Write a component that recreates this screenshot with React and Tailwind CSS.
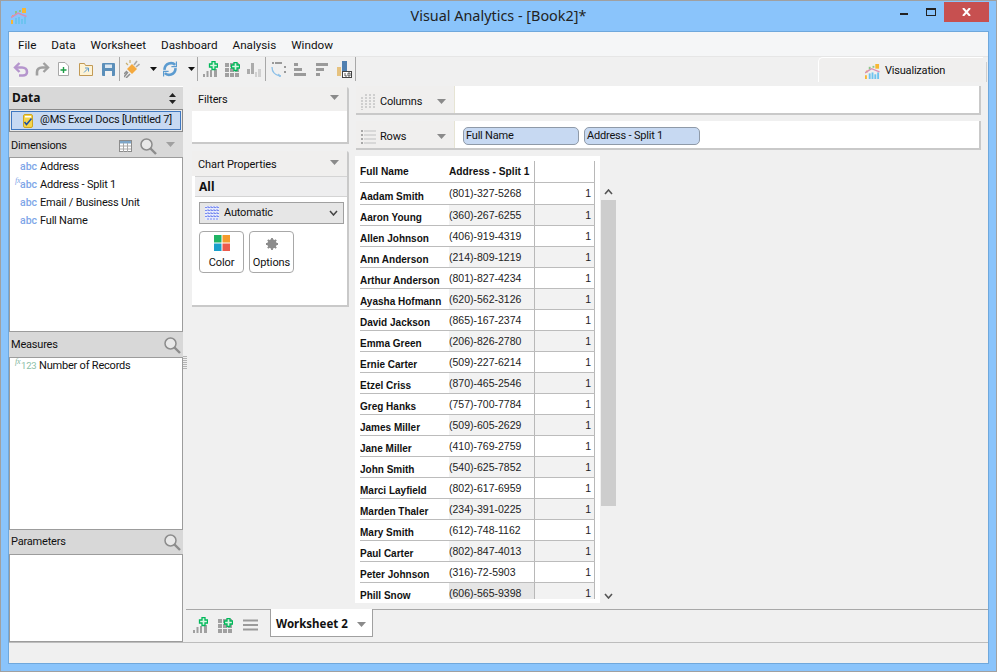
import React from "react";

const UI = { fontFamily: 'Roboto, "Liberation Sans", sans-serif' };
const NOTO = { fontFamily: '"Noto Sans", "Liberation Sans", sans-serif' };

const rows = [
  ["Aadam Smith", "(801)-327-5268"],
  ["Aaron Young", "(360)-267-6255"],
  ["Allen Johnson", "(406)-919-4319"],
  ["Ann Anderson", "(214)-809-1219"],
  ["Arthur Anderson", "(801)-827-4234"],
  ["Ayasha Hofmann", "(620)-562-3126"],
  ["David Jackson", "(865)-167-2374"],
  ["Emma Green", "(206)-826-2780"],
  ["Ernie Carter", "(509)-227-6214"],
  ["Etzel Criss", "(870)-465-2546"],
  ["Greg Hanks", "(757)-700-7784"],
  ["James Miller", "(509)-605-2629"],
  ["Jane Miller", "(410)-769-2759"],
  ["John Smith", "(540)-625-7852"],
  ["Marci Layfield", "(802)-617-6959"],
  ["Marden Thaler", "(234)-391-0225"],
  ["Mary Smith", "(612)-748-1162"],
  ["Paul Carter", "(802)-847-4013"],
  ["Peter Johnson", "(316)-72-5903"],
  ["Phill Snow", "(606)-565-9398"],
];

const Caret = ({ c = "#8a8a8a", w = 9, h = 5 }) => (
  <svg width={w} height={h} viewBox="0 0 10 6" preserveAspectRatio="none"><path d="M0 0h10L5 6z" fill={c} /></svg>
);
const Small = () => (
  <svg width="7" height="4" viewBox="0 0 7 4"><path d="M0 0h7L3.500 4z" fill="#111" /></svg>
);

const Logo = ({ s = 16 }) => (
  <svg width={s} height={s} viewBox="0 0 16 16" className="shrink-0">
    <rect x="0" y="12" width="2" height="4" fill="#f7b733" />
    <rect x="1" y="7" width="2" height="2" fill="#f7b733" />
    <rect x="4" y="10" width="2" height="6" fill="#6cc3f0" />
    <rect x="7" y="9" width="2" height="7" fill="#6cc3f0" />
    <rect x="10" y="11" width="2" height="5" fill="#6cc3f0" />
    <rect x="13" y="9" width="2" height="7" fill="#6cc3f0" />
    <rect x="4" y="3" width="2" height="3" fill="#8cc587" />
    <rect x="8" y="2" width="2" height="2" fill="#8cc587" />
    <rect x="11" y="0" width="4" height="5" fill="#f7b733" />
    <path d="M0 9.500 7 5 15.500 8.500" stroke="#d88fb5" strokeWidth="1.500" fill="none" />
  </svg>
);

const Plus = ({ x, y }) => (
  <path d={`M${x + 2.5} ${y}h3v2.500h2.500v3h-2.500v2.500h-3v-2.500h-2.500v-3h2.500z`} fill="#d8f5e2" stroke="#00b85a" strokeWidth="1.300" />
);

const BarsPlus = () => (
  <svg width="15" height="16" viewBox="0 0 15 16">
    <rect x="0" y="13" width="2" height="3" fill="#a0a0a0" />
    <rect x="3.500" y="10" width="2" height="6" fill="#a0a0a0" />
    <rect x="7" y="9" width="2" height="7" fill="#a0a0a0" />
    <rect x="11" y="8" width="3" height="8" fill="#a0a0a0" />
    <Plus x={6.5} y={0.5} />
  </svg>
);
const GridPlus = () => (
  <svg width="15" height="15" viewBox="0 0 15 15">
    {[0, 5, 10].map((x) => [1, 6, 11].map((y) => <rect key={x + "-" + y} x={x} y={y} width="4" height="4" fill="#a0a0a0" />))}
    <Plus x={6.5} y={0.5} />
  </svg>
);
const Search = () => (
  <svg width="17" height="17" viewBox="0 0 17 17" fill="none" stroke="#8c8c8c">
    <circle cx="6.500" cy="6.500" r="5.500" strokeWidth="1.500" fill="#e8e8e8" />
    <path d="M10.500 10.500l5.500 5.500" strokeWidth="2.400" />
  </svg>
);

const ToolSep = ({ className = "" }) => <div className={"w-px h-[24px] bg-[#a8a8a8] " + className} />;

function Toolbar() {
  return (
    <div className="h-[25px] shrink-0 flex items-center pl-[4px] bg-[#f0f0f0] border-t border-[#e6e6e6] relative">
      <svg width="16" height="15" viewBox="0 0 16 15" fill="none" stroke="#b595cd" strokeWidth="2.600"><path d="M3 5.500h6c3 0 5 2 5 4.500s-2 3.500-4 3.500H6" /><path d="M6.500 1 2 5.500 6.500 10" strokeWidth="2.400" /></svg>
      <svg width="15" height="15" viewBox="0 0 15 15" fill="none" stroke="#a0a0a0" strokeWidth="2.600" className="ml-[6px]"><path d="M12 5.500H7c-3 0-5 2-5 4.500v3.500" /><path d="M8.500 1 13 5.500 8.500 10" strokeWidth="2.400" /></svg>
      <svg width="11" height="14" viewBox="0 0 11 14" className="ml-[8px]"><path d="M.5.500h6.500l3.500 3.500v9.500H.5z" fill="#fff" stroke="#a8a8a8" /><path d="M5.500 5v6M2.500 8h6" stroke="#1c9d45" strokeWidth="1.400" /></svg>
      <svg width="14" height="13" viewBox="0 0 14 13" className="ml-[10px]"><path d="M.5 12.500V.5h5l1 2h7v10z" fill="#fdf3d6" stroke="#c29a55" /><path d="M5 9.500l4-4M6 5h3.500v3.500" stroke="#5a9ad0" fill="none" /></svg>
      <svg width="13" height="13" viewBox="0 0 13 13" className="ml-[9px]"><rect width="13" height="13" rx="1" fill="#5b8fba" /><rect x="3" y="1.500" width="7" height="3.500" fill="#dce8f2" /><rect x="3" y="8" width="7" height="5" fill="#f2f2f2" /></svg>
      <ToolSep className="ml-[4px]" />
      <svg width="16" height="18" viewBox="0 0 16 18" className="ml-[4px]">
        <path d="M0 17 4 12M2 18l4-4M0 14l3-3" stroke="#8f8f8f" strokeWidth="1.500" />
        <path d="M3 9l5-5 5 5-5 5z" fill="#f4a93e" />
        <path d="M10 5l3-4M12 7l3.500-3" stroke="#a8a8a8" strokeWidth="1.600" />
        <path d="M2 3l2 2M6 0v3" stroke="#c8b070" strokeWidth="1.200" />
      </svg>
      <div className="ml-[10px]"><Small /></div>
      <svg width="14" height="16" viewBox="0 0 15 16" fill="none" stroke="#5b9bd0" strokeWidth="2.800" className="ml-[6px]"><path d="M13 3.500C10 .5 2 1 1.500 9" /><path d="M2 12.500c3 3 11 2.500 11.500-5.500" /><path d="M9 5.500h5.500V0M6 10.500H.5V16" strokeWidth="1.500" /></svg>
      <div className="ml-[11px]"><Small /></div>
      <ToolSep className="ml-[2px]" />
      <span className="ml-[5px]"><BarsPlus /></span>
      <span className="ml-[7px]"><GridPlus /></span>
      <svg width="14" height="15" viewBox="0 0 14 15" className="ml-[7px]"><rect x="0" y="7" width="3" height="5" fill="#ababab" /><rect x="4" y="1" width="3" height="11" fill="#ababab" /><rect x="8" y="10" width="2" height="5" fill="#d0d0d0" /><rect x="11" y="7" width="3" height="8" fill="#d0d0d0" /></svg>
      <ToolSep className="ml-[4px]" />
      <svg width="15" height="15" viewBox="0 0 15 15" fill="none" className="ml-[5px]"><path d="M1 5c0 5 3 8 8 9" stroke="#8cc0e8" strokeWidth="1.300" /><path d="M7 12l3 2-2 1" stroke="#8cc0e8" /><path d="M4 1h7" stroke="#9a9a9a" strokeWidth="2" /><path d="M1 1h2M14 4v2M14 9v2" stroke="#9a9a9a" strokeWidth="2" /></svg>
      <svg width="12" height="13" viewBox="0 0 12 13" className="ml-[8px]"><rect x="0" y="0" width="4" height="3" fill="#9a9a9a" /><rect x="0" y="5" width="8" height="3" fill="#9a9a9a" /><rect x="0" y="10" width="12" height="3" fill="#9a9a9a" /></svg>
      <svg width="12" height="13" viewBox="0 0 12 13" className="ml-[10px]"><rect x="0" y="0" width="12" height="3" fill="#9a9a9a" /><rect x="0" y="5" width="8" height="3" fill="#9a9a9a" /><rect x="0" y="10" width="4" height="3" fill="#9a9a9a" /></svg>
      <svg width="15" height="17" viewBox="0 0 15 17" className="ml-[9px]"><rect x="0" y="6" width="4" height="9" fill="#e6c27f" /><rect x="5" y="0" width="5" height="10" fill="#4f7fb0" /><rect x="5.500" y="10.500" width="9" height="6" fill="#fff" stroke="#444" /><path d="M8 12v3h2M11 12h2v3h-2z" stroke="#333" strokeWidth=".8" fill="none" /></svg>
      <ToolSep className="ml-[3px]" />
      <div className="absolute right-[5px] top-0 h-[25px] w-[165px] rounded-tl-[5px] bg-[#f0efee] border-t border-l border-white flex items-center text-[11px] tracking-[-0.2px] text-[#111] pl-[46px] pt-[3px]">
        <Logo s={15} />
        <span className="ml-[5px]">Visualization</span>
        <div className="absolute right-[-4px] top-[4px] bottom-0 w-px bg-[#cfcfcf]" />
      </div>
    </div>
  );
}

const Field = ({ tag, fx, children, green }) => (
  <div className={"h-[18px] flex items-center text-[11px] tracking-[-0.2px] text-[#111] whitespace-nowrap relative " + (green ? "-mt-[1px]" : "")}>
    {fx && <span className={"absolute left-[5px] top-[-1px] text-[8px] italic " + (green ? "text-[#7fb59a]" : "text-[#7ea6e8]")} style={{ fontFamily: "Liberation Serif" }}>fx</span>}
    {green
      ? <span className="ml-[11px] w-[18px] text-[9.500px] text-[#8cc0a8]">{tag}</span>
      : <span className="ml-[10px] w-[20px] text-[10.500px] font-medium tracking-normal text-[#7ea6e8]">{tag}</span>}
    <span>{children}</span>
  </div>
);

function SideHead({ title, h, children }) {
  return (
    <div className={"shrink-0 bg-[#d8d8d8] flex items-center pl-[2px] text-[11px] tracking-[-0.2px] text-[#111] " + h}>
      <span>{title}</span>
      {children}
    </div>
  );
}

function Sidebar() {
  return (
    <div className="w-[174px] shrink-0 flex flex-col text-[#111] relative">
      <div className="h-[23px] shrink-0 bg-[#d8d8d8] flex items-center justify-between pl-[3px] pr-[7px] font-bold text-[12px] border-t border-white" style={NOTO}>
        <span>Data</span>
        <svg width="7" height="11" viewBox="0 0 7 11"><path d="M3.500 0 7 4H0zM3.500 11 7 7H0z" fill="#222" /></svg>
      </div>
      <div className="h-[23px] shrink-0 border border-[#8a8a8a] bg-[#e9e9e9] p-[1px]">
        <div className="h-full border border-[#3f77c0] bg-[#c7d9f2] flex items-center text-[11px] tracking-[-0.2px] pl-[11px] whitespace-nowrap">
          <svg width="10" height="14" viewBox="0 0 10 14" className="shrink-0"><rect x=".5" y=".5" width="9" height="13" rx="1.500" fill="#f5d44b" stroke="#d0a520" /><rect x="2" y="2" width="6" height="1.500" fill="#fff" /><path d="M1.500 8l2 2.500 5-6" stroke="#1e4fa0" strokeWidth="1.500" fill="none" /></svg>
          <span className="ml-[7px]">@MS Excel Docs [Untitled 7]</span>
        </div>
      </div>
      <SideHead title="Dimensions" h="h-[25px] pt-[3px]">
        <div className="ml-auto flex items-center pr-[8px]">
          <svg width="13" height="12" viewBox="0 0 13 12"><rect x=".5" y=".5" width="12" height="11" fill="#fff" stroke="#8c8c8c" /><rect x="1" y="1" width="11" height="2.500" fill="#7ea6c8" /><path d="M1 6h11M1 9h11M4.500 3v9M8.500 3v9" stroke="#a8a8a8" /></svg>
          <span className="ml-[8px]"><Search /></span>
          <span className="ml-[9px] mb-[4px]"><Caret c="#a0a0a0" /></span>
        </div>
      </SideHead>
      <div className="h-[175px] shrink-0 bg-white border border-[#9c9c9c]">
        <Field tag="abc">Address</Field>
        <Field tag="abc" fx>Address - Split 1</Field>
        <Field tag="abc">Email / Business Unit</Field>
        <Field tag="abc">Full Name</Field>
      </div>
      <SideHead title="Measures" h="h-[25px] pt-[1px]">
        <span className="ml-auto mr-[2px]"><Search /></span>
      </SideHead>
      <div className="h-[173px] shrink-0 bg-white border border-[#9c9c9c]">
        <Field tag="123" fx green>Number of Records</Field>
      </div>
      <SideHead title="Parameters" h="h-[24px] pt-[1px]">
        <span className="ml-auto mr-[2px]"><Search /></span>
      </SideHead>
      <div className="h-[88px] shrink-0 bg-white border border-[#9c9c9c]" />
      <div className="absolute left-[174px] top-[270px] w-[4px] h-[14px] bg-[repeating-linear-gradient(#b4b4b4_0px,#b4b4b4_1px,transparent_1px,transparent_2px)]" />
    </div>
  );
}

function CardHead({ title, h }) {
  return (
    <div className={"bg-[#f0efee] flex items-center justify-between pl-[6px] pr-[8px] pt-[3px] text-[11px] tracking-[-0.1px] text-[#111] " + h}>
      <span>{title}</span>
      <span className="mb-[6px]"><Caret /></span>
    </div>
  );
}

function Middle() {
  return (
    <div className="w-[157px] shrink-0 ml-[9px] mt-[1px] flex flex-col gap-[7px]">
      <div className="h-[57px] bg-white border-r-2 border-b-2 border-[#c9c9c9] rounded-tr-[3px]">
        <CardHead title="Filters" h="h-[24px]" />
      </div>
      <div className="h-[156px] bg-white border-r-2 border-b-2 border-[#c9c9c9] rounded-tr-[3px]">
        <CardHead title="Chart Properties" h="h-[25px]" />
        <div className="h-[21px] ml-[3px] bg-[#eeeeef] border-t border-b border-[#d4d4d4] flex items-center pl-[4px] pt-[1px] font-bold text-[12px] text-[#111]" style={NOTO}>All</div>
        <div className="ml-[7px] w-[145px] mt-[5px] h-[22px] border border-[#a0a0a0] bg-[#e6e6e6] flex items-center text-[11px] tracking-[-0.2px] text-[#111] pl-[5px]">
          <svg width="14" height="14" viewBox="0 0 14 14"><rect width="14" height="14" fill="#e6eafc" /><path d="M0 1.500h14M0 4.500h14M0 7.500h14M0 10.500h14M3 0v14M6 0v14M9 0v14M12 0v14" stroke="#7a8cf0" strokeDasharray="2 1" /></svg>
          <span className="ml-[5px] pt-[1px]">Automatic</span>
          <svg width="9" height="6" viewBox="0 0 9 6" className="ml-auto mr-[5px]" fill="none" stroke="#444" strokeWidth="1.500"><path d="M1 1l3.500 4L8 1" /></svg>
        </div>
        <div className="flex gap-[5px] ml-[7px] mt-[7px]">
          <div className="w-[45px] h-[42px] rounded-[4px] border border-[#a8a8a8] bg-white flex flex-col items-center text-[11px] tracking-[-0.1px] text-[#111] pt-[3px]">
            <svg width="16" height="16" viewBox="0 0 16 16"><rect width="7.500" height="7.500" fill="#20b464" /><rect x="8.500" width="7.500" height="7.500" fill="#f59b2c" /><rect y="8.500" width="7.500" height="7.500" fill="#1a9fcb" /><rect x="8.500" y="8.500" width="7.500" height="7.500" fill="#ec5a4c" /></svg>
            <span className="mt-[4px] leading-[16px]">Color</span>
          </div>
          <div className="w-[45px] h-[42px] rounded-[4px] border border-[#a8a8a8] bg-white flex flex-col items-center text-[11px] tracking-[-0.1px] text-[#111] pt-[6px]">
            <svg width="12" height="12" viewBox="0 0 12 12"><circle cx="6" cy="6" r="3.500" fill="none" stroke="#8c8c8c" strokeWidth="2.500" /><path d="M6 0v12M0 6h12M1.800 1.800l8.400 8.400M10.200 1.800l-8.400 8.400" stroke="#8c8c8c" strokeWidth="1.800" /></svg>
            <span className="mt-[5px] leading-[16px]">Options</span>
          </div>
        </div>
      </div>
    </div>
  );
}

function Shelf({ icon, title, children }) {
  return (
    <div className="h-[29px] flex bg-white border-r-2 border-b-2 border-[#c9c9c9]">
      <div className="w-[99px] h-full bg-[#f0efee] border-r border-[#e6e4d4] flex items-center text-[11px] tracking-[-0.2px] text-[#111] pl-[5px] pr-[8px] pt-[5px]">
        {icon}
        <span className="ml-[4px]">{title}</span>
        <span className="ml-auto mb-[1px]"><Caret /></span>
      </div>
      <div className="flex items-center gap-[5px] pl-[8px] pt-[3px]">{children}</div>
    </div>
  );
}

const Pill = ({ children }) => (
  <div className="w-[116px] h-[18px] rounded-[5px] bg-[#c7d9f2] border border-[#8f9aa8] flex items-center pl-[2px] pt-[1px] text-[11px] tracking-[-0.2px] text-[#111]">{children}</div>
);

function DataTable() {
  return (
    <div className="flex h-[447px] mt-[6px] -ml-[1px]">
      <div className="w-[245px] h-full bg-white pl-[5px]" style={{ fontFamily: '"Liberation Sans", sans-serif' }}>
        <div className="h-[443px] w-[235px] overflow-hidden">
          <div className="h-[27px] flex border-b border-[#bcbcbc] font-bold text-[10.200px] text-[#111]">
            <div className="w-[89px] flex items-center mt-[5px]">Full Name</div>
            <div className="w-[86px] mt-[5px] flex items-center border-r border-[#b8b8b8] whitespace-nowrap">Address - Split 1</div>
            <div className="w-[60px] mt-[5px] border-r border-[#b8b8b8]" />
          </div>
          {rows.map(([n, p], i) => (
            <div key={n} className={"flex border-b border-[#bcbcbc] " + (i === 0 ? "h-[22px]" : "h-[21px]")}>
              <div className={"w-[89px] font-bold text-[10px] leading-[12px] text-[#111] whitespace-nowrap " + (i === 0 ? "pt-[8px]" : "pt-[7px]")}>{n}</div>
              <div className={"w-[86px] border-r border-[#b8b8b8] text-[10.500px] leading-[12px] text-[#222] pt-[4px] " + (i === 19 ? "bg-[#e6e6e6]" : i % 2 ? "bg-[#f2f2f2]" : "bg-white")}>{p}</div>
              <div className={"w-[60px] border-r border-[#b8b8b8] text-[10.500px] leading-[12px] text-[#222] text-right pr-[3px] pt-[4px] " + (i % 2 ? "bg-[#f2f2f2]" : "bg-white")}>1</div>
            </div>
          ))}
        </div>
      </div>
      <div className="w-[15px] ml-[1px] pt-[33px] flex flex-col items-center">
        <svg width="9" height="6" viewBox="0 0 9 6" fill="none" stroke="#555" strokeWidth="1.600"><path d="M1 5l3.500-4L8 5" /></svg>
        <div className="w-full h-[306px] bg-[#cdcdcd] mt-[5px] shrink-0" />
        <svg width="9" height="6" viewBox="0 0 9 6" fill="none" stroke="#555" strokeWidth="1.600" className="mt-[87px]"><path d="M1 1l3.500 4L8 1" /></svg>
      </div>
    </div>
  );
}

export default function App() {
  return (
    <div className="w-[997px] h-[672px] bg-[#8ac4fb] border border-[#a0a0a0] flex flex-col overflow-hidden" style={UI}>
      <div className="h-[30px] shrink-0 flex items-center justify-center relative text-[14.400px] text-[#222]" style={NOTO}>
        <div className="absolute left-[10px] top-[7px]"><Logo s={16} /></div>
        <span>Visual Analytics - [Book2]*</span>
        <div className="absolute right-[88px] top-[12px] w-[8px] h-[2px] bg-[#222]" />
        <div className="absolute right-[60px] top-[7px] w-[10px] h-[8px] border border-[#222] border-t-2" />
        <div className="absolute right-[7px] top-[1px] w-[45px] h-[20px] bg-[#c75050] flex items-center justify-center">
          <svg width="9" height="8" viewBox="0 0 9 8" stroke="#fff" strokeWidth="2"><path d="M1 0l7 8M8 0L1 8" /></svg>
        </div>
      </div>
      <div className="mx-[7px] h-[633px] shrink-0 border border-[#6fa8dc] bg-[#f0f0f0] flex flex-col text-[#111]">
        <div className="h-[24px] shrink-0 bg-[#f5f6f7] flex items-center text-[11.700px] pl-[9px] gap-[15px] text-[#111] pt-[4px]">
          <span>File</span><span>Data</span><span>Worksheet</span><span>Dashboard</span><span>Analysis</span><span>Window</span>
        </div>
        <Toolbar />
        <div className="flex h-[561px] shrink-0 pt-[5px]">
          <Sidebar />
          <div className="flex flex-col flex-1 min-w-0">
            <div className="flex flex-1 min-h-0">
              <Middle />
              <div className="flex-1 min-w-0 ml-[7px] mr-[7px]">
                <div className="flex flex-col gap-[6px]">
                  <Shelf title="Columns" icon={<svg width="15" height="16" viewBox="0 0 15 16">{[0,4,8,12].map(x=>[0,3,6,9,12].map(y=><rect key={x+"-"+y} x={x} y={y+ (x===0?3:0)} width="2" height="2" fill="#cfcfcf" />))}</svg>} />
                  <Shelf title="Rows" icon={<svg width="15" height="16" viewBox="0 0 15 16">{[2,6,10,14].map(y=><g key={y}><rect x="0" y={y-1} width="2" height="2" fill="#a8a8a8" /><rect x="3" y={y-1} width="12" height="2" fill="#d8d8d8" /></g>)}</svg>}>
                    <Pill>Full Name</Pill>
                    <Pill>Address - Split 1</Pill>
                  </Shelf>
                </div>
                <DataTable />
              </div>
            </div>
            <div className="h-[33px] shrink-0 ml-[3px] border-t border-[#a8a8a8] flex items-start">
              <div className="flex items-center pl-[7px] pt-[7px]">
                <BarsPlus />
                <span className="ml-[10px]"><GridPlus /></span>
                <svg width="15" height="12" viewBox="0 0 15 12" className="ml-[10px]"><path d="M0 1.500h15M0 6h15M0 10.500h15" stroke="#9a9a9a" strokeWidth="2" /></svg>
              </div>
              <div className="ml-[12px] w-[103px] h-[28px] mt-[-1px] bg-white border-x border-b border-[#a0a0a0] flex items-center pl-[5px] pt-[3px] font-bold text-[11.500px] gap-[9px] whitespace-nowrap" style={NOTO}>
                Worksheet 2 <Caret />
              </div>
            </div>
          </div>
        </div>
        <div className="h-[21px] shrink-0 bg-[#f0f0f0] border-t border-[#bdbdbd]" />
      </div>
    </div>
  );
}
